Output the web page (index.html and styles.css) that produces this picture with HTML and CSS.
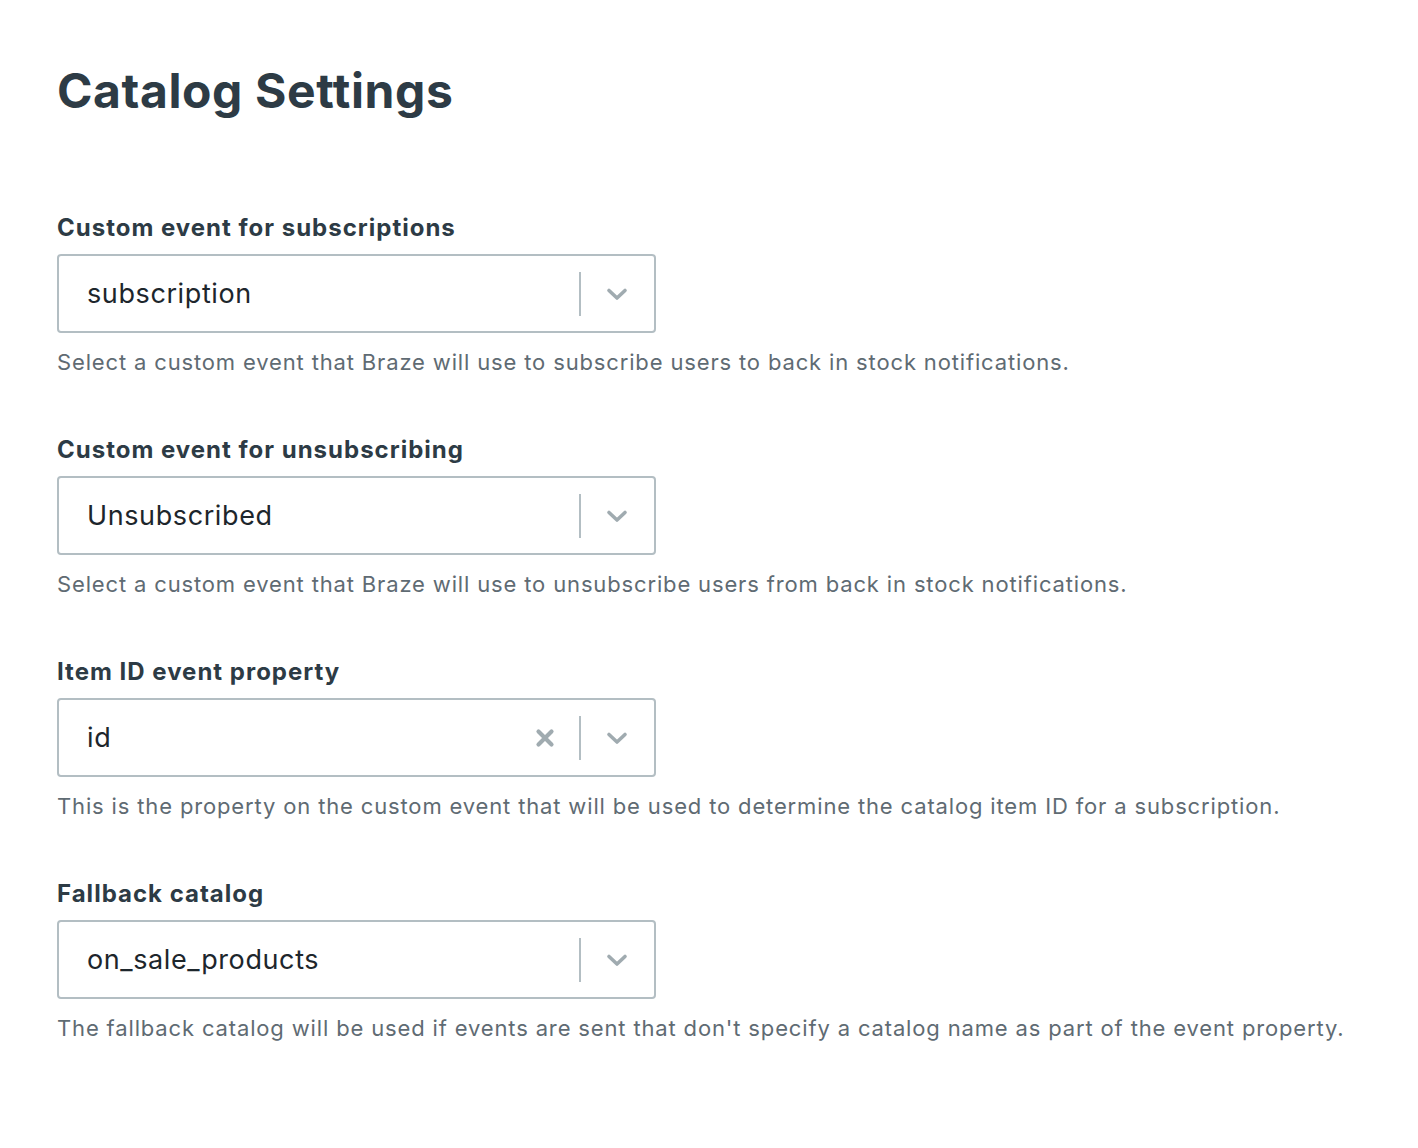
FILE: index.html
```html
<!DOCTYPE html>
<html>
<head>
<meta charset="utf-8">
<link rel="stylesheet" href="styles.css">
</head>
<body>
<main class="page">
  <h1 class="title">Catalog Settings</h1>

  <section class="field">
    <label class="label">Custom event for subscriptions</label>
    <div class="select">
      <span class="value">subscription</span>
      <span class="indicators">
        <span class="sep"></span>
        <svg class="chev" width="22" height="14" viewBox="0 0 22 14"><path d="M3 3.5l8 7.5 8-7.5" fill="none" stroke="#a0abb0" stroke-width="3.6" stroke-linecap="round" stroke-linejoin="round"/></svg>
      </span>
    </div>
    <p class="help">Select a custom event that Braze will use to subscribe users to back in stock notifications.</p>
  </section>

  <section class="field">
    <label class="label">Custom event for unsubscribing</label>
    <div class="select">
      <span class="value">Unsubscribed</span>
      <span class="indicators">
        <span class="sep"></span>
        <svg class="chev" width="22" height="14" viewBox="0 0 22 14"><path d="M3 3.5l8 7.5 8-7.5" fill="none" stroke="#a0abb0" stroke-width="3.6" stroke-linecap="round" stroke-linejoin="round"/></svg>
      </span>
    </div>
    <p class="help">Select a custom event that Braze will use to unsubscribe users from back in stock notifications.</p>
  </section>

  <section class="field">
    <label class="label">Item ID event property</label>
    <div class="select">
      <span class="value">id</span>
      <span class="indicators">
        <svg class="clear" width="22" height="22" viewBox="0 0 22 22"><path d="M4.5 4.5l13 13M17.5 4.5l-13 13" fill="none" stroke="#a0abb0" stroke-width="4.2" stroke-linecap="round"/></svg>
        <span class="sep"></span>
        <svg class="chev" width="22" height="14" viewBox="0 0 22 14"><path d="M3 3.5l8 7.5 8-7.5" fill="none" stroke="#a0abb0" stroke-width="3.6" stroke-linecap="round" stroke-linejoin="round"/></svg>
      </span>
    </div>
    <p class="help">This is the property on the custom event that will be used to determine the catalog item ID for a subscription.</p>
  </section>

  <section class="field">
    <label class="label">Fallback catalog</label>
    <div class="select">
      <span class="value">on_sale_products</span>
      <span class="indicators">
        <span class="sep"></span>
        <svg class="chev" width="22" height="14" viewBox="0 0 22 14"><path d="M3 3.5l8 7.5 8-7.5" fill="none" stroke="#a0abb0" stroke-width="3.6" stroke-linecap="round" stroke-linejoin="round"/></svg>
      </span>
    </div>
    <p class="help">The fallback catalog will be used if events are sent that don't specify a catalog name as part of the event property.</p>
  </section>
</main>
</body>
</html>
```

FILE: styles.css
```css
html, body {
  margin: 0;
  padding: 0;
  background: #ffffff;
}
body {
  font-family: "Inter", "Open Sans", sans-serif;
  color: #2d3b45;
}
.page {
  padding: 56px 57px 0 57px;
}
.title {
  margin: 0 0 86px 0;
  font-size: 48px;
  line-height: 70px;
  font-weight: 700;
  letter-spacing: 0.6px;
  color: #2d3b45;
}
.field {
  margin-bottom: 57px;
}
.label {
  display: block;
  font-size: 24px;
  line-height: 32px;
  font-weight: 700;
  letter-spacing: 1px;
  color: #2d3b45;
  margin-bottom: 10px;
}
.select {
  box-sizing: border-box;
  width: 599px;
  height: 79px;
  border: 2px solid #b3bec3;
  border-radius: 4px;
  display: flex;
  align-items: center;
  padding-left: 28px;
}
.value {
  flex: 1;
  font-size: 27px;
  letter-spacing: 0.6px;
  color: #1d262c;
}
.indicators {
  display: flex;
  align-items: center;
  height: 100%;
}
.clear {
  margin-right: 23px;
}
.sep {
  width: 2px;
  height: 44px;
  background: #b3bec3;
}
.chev {
  margin: 0 26px 0 25px;
}
.help {
  margin: 14px 0 0 0;
  font-size: 22px;
  line-height: 30px;
  letter-spacing: 0.85px;
  color: #5f6b73;
}
```
